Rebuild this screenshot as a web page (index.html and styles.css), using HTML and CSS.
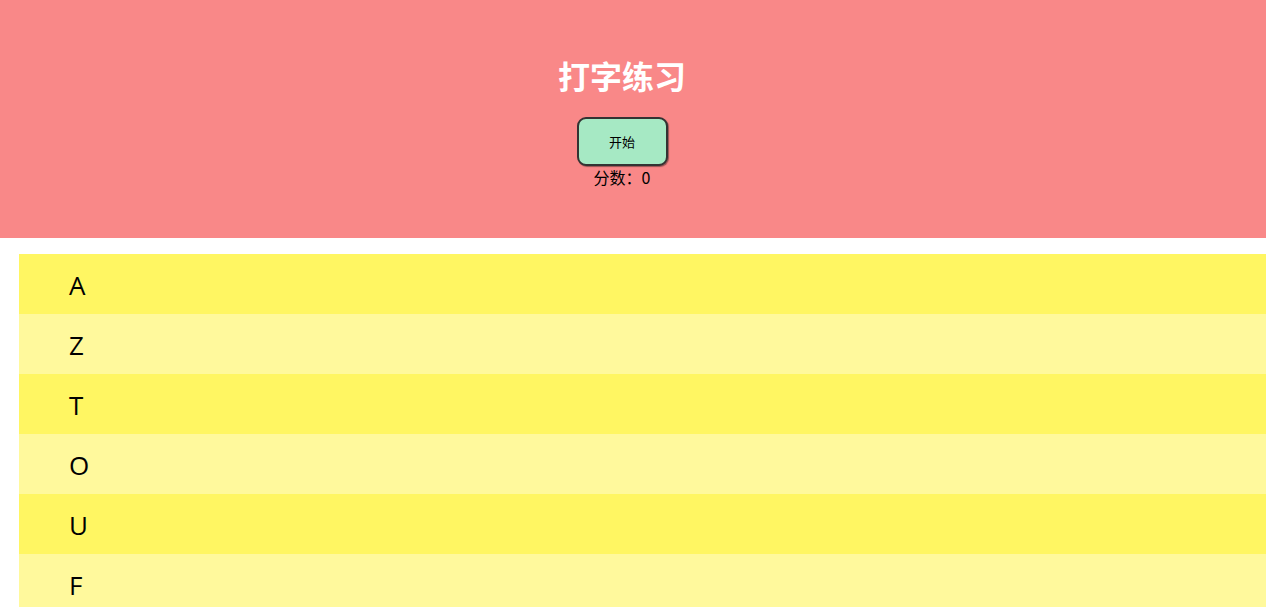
FILE: index.html
```html
<!DOCTYPE html>
<html lang="zh">
<head>
<meta charset="utf-8">
<title>打字练习</title>
<link rel="stylesheet" href="styles.css">
</head>
<body>
<div class="page">
  <header class="header">
    <h1 class="title">打字练习</h1>
    <button class="start-btn">开始</button>
    <div class="score">分数：0</div>
  </header>
  <ul class="letters">
    <li class="row">A</li>
    <li class="row">Z</li>
    <li class="row">T</li>
    <li class="row">O</li>
    <li class="row">U</li>
    <li class="row">F</li>
  </ul>
</div>
</body>
</html>
```
FILE: styles.css
```css
html, body {
  margin: 0;
  padding: 0;
  background: #ffffff;
  overflow: hidden;
}
body {
  font-family: "Noto Sans", "Noto Sans CJK SC", sans-serif;
  color: #000;
}
.page {
  margin-right: 2px;
}
.header {
  background: #f98888;
  height: 238px;
  box-sizing: border-box;
  padding: 56px 22px 0 0;
  display: flex;
  flex-direction: column;
  align-items: center;
}
.title {
  margin: 0;
  font-size: 32px;
  line-height: 38px;
  font-weight: 700;
  color: #ffffff;
  font-family: "Noto Sans CJK SC", sans-serif;
}
.start-btn {
  margin-top: 23px;
  width: 91px;
  height: 49px;
  background: #a6e9c4;
  border: 2px solid #333;
  border-radius: 9px;
  font-size: 13px;
  font-family: "Noto Sans CJK SC", sans-serif;
  color: #000;
  padding: 0;
  box-shadow: 1px 1px 1px rgba(0,0,0,0.4);
}
.score {
  font-size: 16px;
  line-height: 22px;
  font-family: "Noto Sans CJK SC", sans-serif;
}
.letters {
  list-style: none;
  margin: 16px 0 0 19px;
  padding: 0;
}
.row {
  height: 60px;
  box-sizing: border-box;
  padding-top: 2px;
  display: flex;
  align-items: center;
  padding-left: 50px;
  font-size: 26px;
  font-family: "Open Sans", sans-serif;
  background: #fff662;
}
.row:nth-child(even) {
  background: #fff99c;
}
```
